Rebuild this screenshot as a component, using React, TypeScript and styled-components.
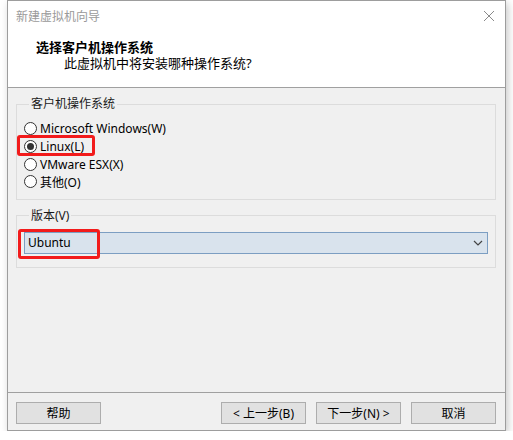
import React from "react";
import styled, { createGlobalStyle } from "styled-components";

const Global = createGlobalStyle`
  html, body {
    margin: 0;
    padding: 0;
    background: #ffffff;
  }
  body {
    font-family: "Noto Sans", "Noto Sans CJK SC", sans-serif;
    font-size: 12px;
    color: #000;
  }
`;

const Window = styled.div`
  margin-left: 7px;
  width: 499px;
  height: 431px;
  box-sizing: border-box;
  border: 1px solid #9d9d9d;
  background: #f0f0f0;
  display: flex;
  flex-direction: column;
  box-shadow: 2px 3px 8px rgba(0, 0, 0, 0.22);
`;

const TitleBar = styled.div`
  height: 30px;
  background: #fff;
  display: flex;
  align-items: center;
  justify-content: space-between;
  padding: 0 10px 0 8px;
`;

const Title = styled.span`
  color: #9a9a9a;
  font-size: 12px;
  line-height: 16px;
  padding-top: 1px;
`;

const Header = styled.div`
  background: #fff;
  height: 57px;
  box-sizing: border-box;
  padding: 8px 0 0 28px;
  border-bottom: 1px solid #a0a0a0;
`;

const Heading = styled.div`
  font-weight: bold;
  font-size: 13px;
  line-height: 16px;
`;

const Subtitle = styled.div`
  font-size: 13px;
  line-height: 16px;
  padding-left: 28px;
`;

const Body = styled.div`
  flex: 1;
  padding: 8px 9px 0 8px;
  display: flex;
  flex-direction: column;
  gap: 8px;
`;

const Group = styled.fieldset<{ $pb: number }>`
  margin: 0;
  padding: 8px 7px ${(p) => p.$pb}px 7px;
  border: 1px solid #dcdcdc;
  min-width: 0;
`;

const Legend = styled.legend`
  margin-left: 5px;
  padding: 0 2px;
  font-size: 12px;
  line-height: 16px;
  color: #1a1a1a;
`;

const RadioList = styled.div`
  display: flex;
  flex-direction: column;
`;

const RadioRow = styled.label`
  position: relative;
  display: inline-flex;
  align-self: flex-start;
  align-items: center;
  gap: 3px;
  height: 17.7px;
  font-size: 12px;
  white-space: nowrap;
`;

const RadioDot = styled.span<{ $on?: boolean }>`
  width: 13px;
  height: 13px;
  box-sizing: border-box;
  border-radius: 50%;
  border: 1px solid #333;
  background: #fff;
  display: inline-flex;
  align-items: center;
  justify-content: center;
  &::after {
    content: "";
    width: 7px;
    height: 7px;
    border-radius: 50%;
    background: ${(p) => (p.$on ? "#333" : "transparent")};
  }
`;

const Mark = styled.span<{ $l: number; $t: number; $w: number; $h: number }>`
  position: absolute;
  left: ${(p) => p.$l}px;
  top: ${(p) => p.$t}px;
  width: ${(p) => p.$w}px;
  height: ${(p) => p.$h}px;
  box-sizing: border-box;
  border: 3px solid #f21b1b;
  border-radius: 3px;
  pointer-events: none;
`;

const Combo = styled.div`
  position: relative;
  height: 22px;
  box-sizing: border-box;
  border: 1px solid #7c9ec2;
  background: #d9e3ed;
  display: flex;
  align-items: center;
  justify-content: space-between;
  padding: 0 4px 0 3px;
  font-size: 12px;
`;

const Footer = styled.div`
  border-top: 1px solid #a0a0a0;
  padding: 9px 9px 6px 8px;
  display: flex;
  gap: 10px;
`;

const Button = styled.button<{ $push?: boolean }>`
  width: 85px;
  height: 22px;
  box-sizing: border-box;
  margin: 0;
  margin-left: ${(p) => (p.$push ? "auto" : "0")};
  border: 1px solid #adadad;
  background: #e1e1e1;
  font-family: inherit;
  font-size: 12px;
  color: #000;
  padding: 0;
`;

const Radio = ({ label, on }: { label: string; on?: boolean }) => (
  <RadioRow>
    <RadioDot $on={on} />
    {label}
    {on && <Mark $l={-7} $t={-3} $w={78} $h={21} />}
  </RadioRow>
);

export default function App() {
  return (
    <>
      <Global />
      <Window>
        <TitleBar>
          <Title>新建虚拟机向导</Title>
          <svg width="12" height="12" viewBox="0 0 12 12">
            <path d="M1 1 L11 11 M11 1 L1 11" stroke="#8a8a8a" strokeWidth="1" />
          </svg>
        </TitleBar>
        <Header>
          <Heading>选择客户机操作系统</Heading>
          <Subtitle>此虚拟机中将安装哪种操作系统?</Subtitle>
        </Header>
        <Body>
          <Group $pb={8}>
            <Legend>客户机操作系统</Legend>
            <RadioList>
              <Radio label="Microsoft Windows(W)" />
              <Radio label="Linux(L)" on />
              <Radio label="VMware ESX(X)" />
              <Radio label="其他(O)" />
            </RadioList>
          </Group>
          <Group $pb={13}>
            <Legend>版本(V)</Legend>
            <Combo>
              <span>Ubuntu</span>
              <svg width="10" height="6" viewBox="0 0 10 6">
                <path d="M1 1 L5 5 L9 1" stroke="#444" strokeWidth="1.2" fill="none" />
              </svg>
              <Mark $l={-7} $t={-4} $w={82} $h={30} />
            </Combo>
          </Group>
        </Body>
        <Footer>
          <Button>帮助</Button>
          <Button $push>&lt; 上一步(B)</Button>
          <Button>下一步(N) &gt;</Button>
          <Button>取消</Button>
        </Footer>
      </Window>
    </>
  );
}
